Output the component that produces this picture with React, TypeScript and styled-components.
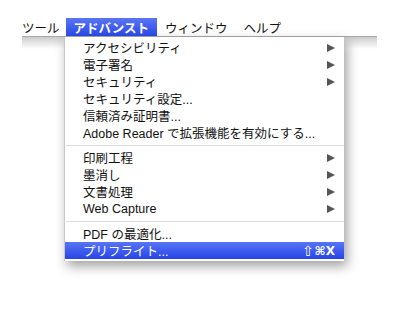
import React from "react";
import styled, { createGlobalStyle } from "styled-components";

const Global = createGlobalStyle`
  html, body { margin: 0; padding: 0; background: #ffffff; }
  body { font-family: "Liberation Sans", "Noto Sans CJK JP", sans-serif; }
`;

const Page = styled.div`
  width: 400px;
  height: 325px;
  padding-top: 18px;
  box-sizing: border-box;
  overflow: hidden;
  background: #fff;
`;

const MenuBar = styled.div`
  position: relative;
  margin-left: 22px;
  width: 355px;
  height: 18px;
  display: flex;
  align-items: stretch;
  border-bottom: 1px solid #a9a9a9;
  font-size: 12.5px;
  color: #111;
  &::after {
    content: "";
    position: absolute;
    left: 0;
    right: 0;
    top: 19px;
    height: 12px;
    background: linear-gradient(to bottom, rgba(0,0,0,0.2), rgba(0,0,0,0));
  }
`;

const BarItem = styled.div<{ $active?: boolean; $first?: boolean }>`
  display: flex;
  align-items: center;
  padding: ${(p) => (p.$first ? "0 6px 0 0" : "0 8px")};
  color: ${(p) => (p.$active ? "#fff" : "#111")};
  font-weight: ${(p) => (p.$active ? "bold" : "normal")};
  background: ${(p) =>
    p.$active ? "linear-gradient(to bottom, #5a76f4, #2b49ea)" : "transparent"};
`;

const Menu = styled.div`
  position: relative;
  z-index: 2;
  margin-left: 64px;
  width: 279px;
  padding: 2px 0 2px;
  background: #fff;
  border-left: 1px solid #c8c8c8;
  box-shadow: 3px 5px 11px rgba(0, 0, 0, 0.38);
  font-size: 12.5px;
`;

const Item = styled.div<{ $selected?: boolean }>`
  height: 17px;
  display: flex;
  align-items: center;
  padding: 0 9px 0 18px;
  color: ${(p) => (p.$selected ? "#fff" : "#111")};
  background: ${(p) =>
    p.$selected ? "linear-gradient(to bottom, #5775f4, #2744e8)" : "transparent"};
`;

const Label = styled.span`
  flex: 1;
  white-space: nowrap;
`;

const Arrow = styled.span`
  width: 0;
  height: 0;
  border-top: 4.5px solid transparent;
  border-bottom: 4.5px solid transparent;
  border-left: 8px solid #555;
`;

const Shortcut = styled.span`
  display: flex;
  align-items: center;
  gap: 1px;
  font-family: "DejaVu Sans", sans-serif;
  font-weight: bold;
  font-size: 12px;
  color: #fff;
`;

const ShiftGlyph = styled.span`
  font-size: 14px;
  font-weight: normal;
  line-height: 1;
`;

const Separator = styled.div`
  height: 1px;
  margin: 4px 0 3px 1px;
  background: #dcdcdc;
`;

type Entry =
  | { kind: "item"; label: string; sub?: boolean; shortcut?: boolean; selected?: boolean }
  | { kind: "sep" };

const entries: Entry[] = [
  { kind: "item", label: "アクセシビリティ", sub: true },
  { kind: "item", label: "電子署名", sub: true },
  { kind: "item", label: "セキュリティ", sub: true },
  { kind: "item", label: "セキュリティ設定..." },
  { kind: "item", label: "信頼済み証明書..." },
  { kind: "item", label: "Adobe Reader で拡張機能を有効にする..." },
  { kind: "sep" },
  { kind: "item", label: "印刷工程", sub: true },
  { kind: "item", label: "墨消し", sub: true },
  { kind: "item", label: "文書処理", sub: true },
  { kind: "item", label: "Web Capture", sub: true },
  { kind: "sep" },
  { kind: "item", label: "PDF の最適化..." },
  { kind: "item", label: "プリフライト...", shortcut: true, selected: true },
];

export default function App() {
  return (
    <>
      <Global />
      <Page>
        <MenuBar>
          <BarItem $first>ツール</BarItem>
          <BarItem $active>アドバンスト</BarItem>
          <BarItem>ウィンドウ</BarItem>
          <BarItem>ヘルプ</BarItem>
        </MenuBar>
        <Menu>
          {entries.map((e, i) =>
            e.kind === "sep" ? (
              <Separator key={i} />
            ) : (
              <Item key={i} $selected={e.selected}>
                <Label>{e.label}</Label>
                {e.sub && <Arrow />}
                {e.shortcut && (
                  <Shortcut>
                    <ShiftGlyph>⇧</ShiftGlyph>
                    <span>⌘X</span>
                  </Shortcut>
                )}
              </Item>
            )
          )}
        </Menu>
      </Page>
    </>
  );
}
